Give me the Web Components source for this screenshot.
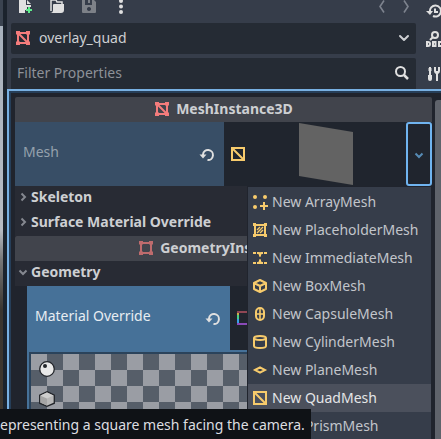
<!DOCTYPE html>
<html lang="en">
<head>
<meta charset="utf-8">
<title>Inspector</title>
<style>
html, body { height: 100%; margin: 0; }
body { overflow: hidden; background: #363d4a; color: #cdcfd2; font: 14px/20px "Noto Sans", "Open Sans", sans-serif; }
</style>
</head>
<body>
<editor-window></editor-window>
<script>
const MESH3D = '<g fill="none" stroke="#f47c7c" stroke-width="2"><path d="M3 3h10v10H3zM3 3l10 10"/></g><path fill="#f47c7c" d="M1 1h4v3.500H1zM11 1h4v3.500h-4zM1 11.500h4V15H1zM11 11.500h4V15h-4z"/>';
const ICONS = {
  mesh3d: MESH3D,
  geometry: '<g opacity=".7"><path fill="none" stroke="#f47c7c" stroke-width="2" d="M3 3h10v10H3z"/><path fill="#f47c7c" d="M1 1h4v3.500H1zM11 1h4v3.500h-4zM1 11.500h4V15H1zM11 11.500h4V15h-4z"/></g>',
  file: '<path fill="#e0e0e0" d="M2 1v13h6v-3h2V8h4V6H9V1zM10 1v4h4z"/><path fill="#5fef8c" d="M11 8h2v2h2v2h-2v2h-2v-2H9v-2h2z"/>',
  folder: '<path fill="none" stroke="#e0e0e0" stroke-width="1.500" d="M13 5V3H8L7 1H2v11"/><path fill="#e0e0e0" d="M5 5h10v6q0 3-3 3H1q3 0 3-3V6q0-1 1-1z"/>',
  save: '<path fill="#7d8188" fill-rule="evenodd" d="M2 0h10l3 3v10q0 1-1 1H2q-1 0-1-1V1q0-1 1-1zm2 1v5h7V1H9v3H7V1zm4 7a2 2 0 1 0 .01 0z"/>',
  dots: '<g fill="#e0e0e0"><circle cx="8" cy="2" r="2"/><circle cx="8" cy="7.500" r="2"/><circle cx="8" cy="13" r="2"/></g>',
  back: '<path fill="none" stroke="#7d838e" stroke-width="1.600" d="M10 1.500L6 7.500l4 6"/>',
  forward: '<path fill="none" stroke="#7d838e" stroke-width="1.600" d="M6 1.500l4 6-4 6"/>',
  history: '<path fill="none" stroke="#e0e0e0" stroke-width="2" d="M4 8a5.500 5.500 0 1 1 3 4M9 4.500V8h3"/><path fill="#e0e0e0" d="M0 7h7l-3 4z"/>',
  doc: '<circle cx="9" cy="4" r="3" fill="none" stroke="#e0e0e0" stroke-width="2"/><path fill="none" stroke="#e0e0e0" stroke-width="2" d="M7 6L4 9M1 11v4h1q2 0 2-2t-2-2zM7 11h2.500v4H7zM15 11h-2v4h2"/>',
  tools: '<path fill="#e0e0e0" d="M3 1h2v8h1v4q0 2-2 2t-2-2V9h1zM2.500 2h3v3h-3zM8 1v4q0 2 2 3v7h2V8q2-1 2-3V1h-2v4h-2V1z"/>',
  down: '<path fill="none" stroke="currentColor" stroke-width="2" stroke-linecap="round" stroke-linejoin="round" d="M4 6l4 4 4-4"/>',
  smalldown: '<path fill="none" stroke="currentColor" stroke-width="2" d="M4.500 6.500L8 10l3.500-3.500"/>',
  right: '<path fill="none" stroke="currentColor" stroke-width="2" d="M6.500 4.500L10 8l-3.500 3.500"/>',
  search: '<g fill="none" stroke="#e0e0e0" stroke-width="2"><circle cx="6.500" cy="6.500" r="4.500"/><path stroke-width="2.500" d="M10 10l4 4"/></g>',
  revert: '<path fill="none" stroke="#e0e0e0" stroke-width="2" d="M4 9V7.500a5 5 0 1 1 4.500 5.500"/><path fill="#e0e0e0" d="M.5 7.500h7L4 11.500z"/>',
  quad: '<path fill="none" stroke="#f7cb6c" stroke-width="2" d="M2 2h12v12H2zM2 2l12 12"/>',
  array: '<g fill="#f7cb6c"><circle cx="3" cy="3" r="2"/><circle cx="13" cy="3" r="2"/><circle cx="3" cy="13" r="2"/><path d="M11 8h2v3h3v2h-3v3h-2v-3H8v-2h3z"/></g>',
  placeholder: '<path fill="none" stroke="#f7cb6c" stroke-width="2" d="M3 3h10v10H3z"/><path fill="#f7cb6c" d="M1 1h3v3H1zM12 1h3v3h-3zM1 12h3v3H1zM12 12h3v3h-3z"/><path stroke="#f7cb6c" stroke-width="1.400" d="M5 8l3-3M5 11l6-6M8 11l3-3"/>',
  immediate: '<g fill="none" stroke="#f7cb6c" stroke-width="2"><path d="M1 3h3M12 3h3M1 13h3M12 13h3M5 3h2l1 2 1-2h2M5 13h2l1-2 1 2h2M8 5v1.500M8 9.500V11"/></g>',
  box: '<path fill="none" stroke="#f7cb6c" stroke-width="2" stroke-linejoin="round" d="M8 2l6 3v6l-6 3-6-3V5zM2 5l6 3 6-3M8 8v6"/>',
  capsule: '<g fill="none" stroke="#f7cb6c" stroke-width="2"><rect x="4" y="2" width="8" height="12" rx="4"/><path stroke-width="1.600" d="M8 2v12M4 8h8"/></g>',
  cylinder: '<g fill="none" stroke="#f7cb6c" stroke-width="2"><ellipse cx="8" cy="4" rx="6" ry="2"/><path d="M2 4v8q0 2 6 2t6-2V4"/></g>',
  plane: '<path fill="none" stroke="#f7cb6c" stroke-width="2" d="M3 8l5-2.700L13 8l-5 2.700z"/>',
  prism: '<path fill="none" stroke="#f7cb6c" stroke-width="2" d="M8 2l6 11H2z"/>',
  material: '<g fill="none" stroke-width="2"><path stroke="#8f4654" d="M1 2h14"/><path stroke="#c9b04a" d="M2 3v2"/><path stroke="#4ad08a" d="M2 5v4"/><path stroke="#3aa0e8" d="M2 9v4"/><path stroke="#8a4ab8" d="M1 14h14"/></g>'
};

function define(name, render) {
  customElements.define(name, class extends HTMLElement {
    connectedCallback() {
      if (this.shadowRoot) return;
      const t = document.createElement('template');
      t.innerHTML = render(this);
      this.attachShadow({ mode: 'open' }).append(t.content.cloneNode(true));
    }
  });
}

define('ui-icon', el => `
<style>:host{display:block;flex:none;width:16px;height:16px}svg{display:block;width:16px;height:16px}</style>
<svg viewBox="0 0 16 16" aria-hidden="true">${ICONS[el.getAttribute('name')]}</svg>`);

define('tool-button', el => `
<style>:host{display:block;flex:none}button{display:block;padding:0;border:0;background:none;color:inherit}</style>
<button type="button" aria-label="${el.getAttribute('label')}"><ui-icon name="${el.getAttribute('icon')}"></ui-icon></button>`);

define('dock-row', () => `
<style>
:host{display:flex;align-items:center;gap:10px;padding-left:4px}
.main{flex:1;min-width:0}
.side{flex:none;width:15px;overflow:hidden}
</style>
<div class="main"><slot></slot></div><div class="side"><slot name="side"></slot></div>`);

define('tool-bar', () => `
<style>:host{display:flex;align-items:center;height:13px;padding:0 2px 10px 6px;gap:16px}.space{flex:1}.nav{display:flex;gap:8px}</style>
<tool-button icon="file" label="New resource"></tool-button>
<tool-button icon="folder" label="Load resource"></tool-button>
<tool-button icon="save" label="Save resource"></tool-button>
<tool-button icon="dots" label="More options"></tool-button>
<div class="space"></div>
<div class="nav"><tool-button icon="back" label="Previous object"></tool-button><tool-button icon="forward" label="Next object"></tool-button></div>`);

define('node-picker', () => `
<style>
:host{display:grid;grid-template-columns:16px 1fr 16px;align-items:center;gap:8px;box-sizing:border-box;height:31px;padding:0 4px 1px;background:#252b34;border-radius:2px}
select{appearance:none;min-width:0;padding:0;border:0;background:none;color:inherit;font:inherit;outline:0}
</style>
<ui-icon name="mesh3d"></ui-icon>
<select aria-label="Edited node"><option>overlay_quad</option></select>
<ui-icon name="down"></ui-icon>`);

define('filter-box', () => `
<style>
:host{display:flex;align-items:center;box-sizing:border-box;height:31px;padding:0 6px 2px;background:#252b34;border-radius:2px 2px 0 0}
input{flex:1;min-width:0;padding:0;border:0;background:none;color:#cdcfd2;font:inherit;outline:0}
input::placeholder{color:#8d9198;opacity:1}
</style>
<input type="text" placeholder="Filter Properties" aria-label="Filter Properties"><ui-icon name="search"></ui-icon>`);

define('class-header', el => `
<style>:host{display:flex;align-items:center;justify-content:center;gap:6px;box-sizing:border-box;height:25px;padding-bottom:2px;background:#41444c;font-weight:700;border-radius:2px 2px 0 0}</style>
<ui-icon name="${el.getAttribute('icon')}"></ui-icon><slot></slot>`);

define('section-row', el => `
<style>
:host{display:block;background:#282b34}
button{display:flex;align-items:center;width:100%;height:25px;padding:0 0 4px;border:0;background:none;color:inherit;font:inherit;font-weight:700}
ui-icon{color:#858890}
</style>
<button type="button" aria-expanded="${el.hasAttribute('open')}"><ui-icon name="${el.hasAttribute('open') ? 'smalldown' : 'right'}"></ui-icon><slot></slot></button>`);

define('resource-row', () => `
<style>
:host{position:relative;display:grid;grid-template-columns:minmax(0,1fr) minmax(0,1fr);height:64px;color:#95a1ad}
.label{display:flex;align-items:center;justify-content:space-between;padding:0 9px 4px 8px;background:var(--label,#384e66)}
.value{display:flex;align-items:center;background:#20252e;padding-left:6px}
tool-button{padding-top:6px}
</style>
<div class="label"><slot></slot><tool-button icon="revert" label="Revert value"></tool-button></div>
<div class="value"><slot name="value"></slot></div>
<slot name="menu"></slot>`);

define('quad-preview', () => `
<style>:host{display:flex;flex:1;justify-content:center}svg{width:54px;height:62px}</style>
<svg viewBox="0 0 54 62" role="img" aria-label="Mesh preview"><path fill="#636363" d="M0 0l54 9v53L0 53z"/></svg>`);

define('drop-button', () => `
<style>:host{display:block;align-self:stretch}button{display:grid;place-items:center;width:26px;height:100%;padding:2px 0 0;border:2px solid #70b4f0;border-radius:3px;background:none;color:#568bb5}</style>
<button type="button" aria-label="Resource options" aria-haspopup="menu" aria-expanded="true"><ui-icon name="smalldown"></ui-icon></button>`);

define('popup-menu', () => `
<style>:host{position:absolute;z-index:1;top:100%;right:0;min-width:183px;padding-top:1px;background:#363d4a;border:1px solid #20242d}</style>
<div role="menu"><slot></slot></div>`);

define('menu-option', el => `
<style>
:host{display:block}
button{display:flex;align-items:center;gap:4px;width:100%;height:28px;padding:0 12px 0 4px;border:0;background:none;color:#c2c5ca;font:inherit;white-space:nowrap}
:host([active]) button{background:#4b505c;color:#e4e5e7}
</style>
<button type="button" role="menuitem"><ui-icon name="${el.getAttribute('icon')}"></ui-icon><slot></slot></button>`);

define('material-preview', () => `
<style>
:host{display:block;background:#467198;padding:2px 2px 0}
.board{height:120px;border:2px solid #2b435b;background:repeating-conic-gradient(#565e69 0 25%,#9a9da4 0 50%) 0 0/32px 32px}
svg{display:block;width:16px;height:46px;padding:7px 8px}
</style>
<div class="board"><svg viewBox="0 0 16 46" role="img" aria-label="Preview shape: sphere or box">
<circle cx="8" cy="8" r="7.300" fill="#e8e8e8" stroke="#22252a" stroke-width="1.300"/><circle cx="6" cy="5" r="2" fill="#22252a"/>
<path d="M8 30.700l7.300 3.500v8L8 45.300.7 42.200v-8z" fill="#b8b8b8" stroke="#22252a" stroke-width="1.300"/><path d="M1.500 34.700L8 37.500v7l-6.500-3z" fill="#a5a5a5"/><path d="M1.500 34.500L8 31.500l6.500 3L8 37.500z" fill="#cecece"/>
</svg></div>`);

define('inspector-panel', () => `
<style>
:host{display:flex;flex:1;gap:3px;min-height:0;overflow:hidden;padding:6px 0 0 6px;border:solid #78b0e2;border-width:2px 0 0 2px;background:#20242d;box-shadow:inset 2px 2px #263e58}
.props{flex:1;min-width:0}
.bar{width:6px;margin-top:3px;background:#5f636b;border-radius:3px 0 0 0}
.nested{margin-left:12px}
.nested resource-row{--label:#467198;color:#e8edf2}
</style>
<div class="props">
<class-header icon="mesh3d">MeshInstance3D</class-header>
<resource-row>Mesh
<ui-icon slot="value" name="quad"></ui-icon><quad-preview slot="value"></quad-preview><drop-button slot="value"></drop-button>
<popup-menu slot="menu">
<menu-option icon="array">New ArrayMesh</menu-option>
<menu-option icon="placeholder">New PlaceholderMesh</menu-option>
<menu-option icon="immediate">New ImmediateMesh</menu-option>
<menu-option icon="box">New BoxMesh</menu-option>
<menu-option icon="capsule">New CapsuleMesh</menu-option>
<menu-option icon="cylinder">New CylinderMesh</menu-option>
<menu-option icon="plane">New PlaneMesh</menu-option>
<menu-option icon="quad" active>New QuadMesh</menu-option>
<menu-option icon="prism">New PrismMesh</menu-option>
</popup-menu>
</resource-row>
<section-row>Skeleton</section-row>
<section-row>Surface Material Override</section-row>
<class-header icon="geometry">GeometryInstance3D</class-header>
<section-row open>Geometry</section-row>
<div class="nested">
<resource-row>Material Override<ui-icon slot="value" name="material"></ui-icon></resource-row>
<material-preview></material-preview>
</div>
</div>
<div class="bar"></div>`);

define('hint-tip', () => `
<style>:host{position:absolute;z-index:2;left:0;bottom:0;height:30px;padding:2px 6px 0 0;box-sizing:border-box;display:flex;align-items:center;background:#0f1216;color:#dddee0;white-space:nowrap}</style>
<span role="tooltip"><slot></slot></span>`);

define('editor-window', () => `
<style>
:host{position:relative;display:flex;height:100%;overflow:hidden}
.view{width:3px;border-right:4px solid #1b232d;background:linear-gradient(#3a4350 26px,#a7b1bd 26px,#b8bcc3 230px,#777 260px,#3a352f 310px,#40372d)}
.dock{display:flex;flex:1;flex-direction:column;min-width:0}
.rows{display:grid;gap:4px}
</style>
<div class="view"></div>
<div class="dock">
<dock-row><tool-bar></tool-bar><tool-button slot="side" icon="history" label="History"></tool-button></dock-row>
<div class="rows">
<dock-row><node-picker></node-picker><tool-button slot="side" icon="doc" label="Open documentation"></tool-button></dock-row>
<dock-row><filter-box></filter-box><tool-button slot="side" icon="tools" label="Manage properties"></tool-button></dock-row>
</div>
<inspector-panel></inspector-panel>
</div>
<hint-tip>epresenting a square mesh facing the camera.</hint-tip>`);
</script>
</body>
</html>
